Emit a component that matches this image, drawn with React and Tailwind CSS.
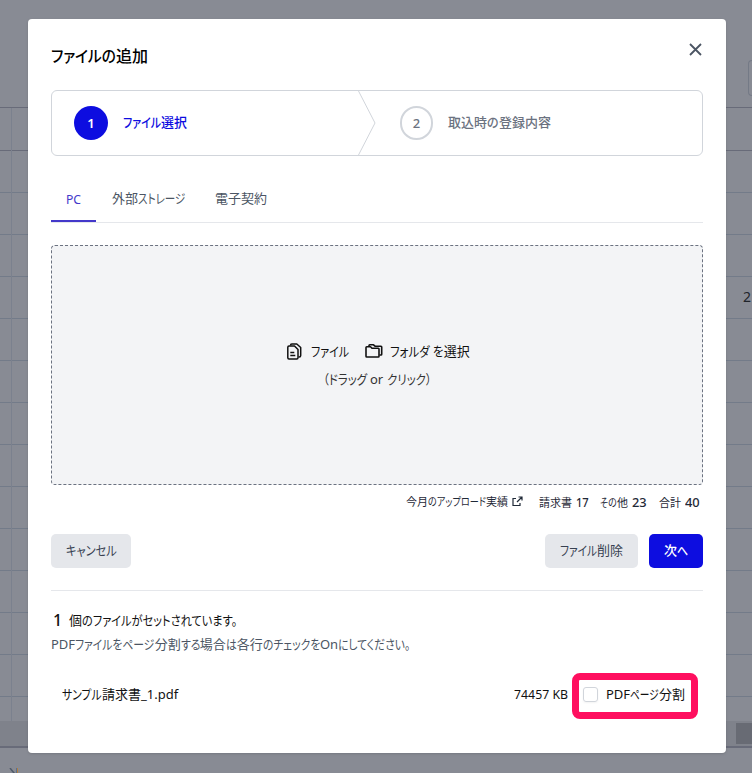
import { useLayoutEffect, useRef } from "react";

const KANA = /([\u3000-\u30ff（）。]+)/;

// Sets the text so that it fills the given width: the kana are condensed and
// the other glyphs keep their own widths.
function T({ w, className = "", children }) {
  const ref = useRef(null);
  const hasKana = KANA.test(children);
  const parts = hasKana ? children.split(KANA).filter(Boolean) : [children];
  useLayoutEffect(() => {
    const runs = [...ref.current.querySelectorAll("[data-run]")];
    const widths = runs.map((r) => r.firstChild.offsetWidth);
    const sum = widths.reduce((a, b) => a + b, 0);
    const rest = ref.current.offsetWidth - sum;
    const ratio = (w - rest) / sum;
    runs.forEach((r, i) => {
      r.style.width = `${widths[i] * ratio}px`;
      r.firstChild.style.transform = `scaleX(${ratio})`;
    });
  }, [w]);
  return (
    <span ref={ref} className={`inline-flex shrink-0 whitespace-pre ${className}`}>
      {parts.map((p, i) =>
        !hasKana || KANA.test(p) ? (
          <span key={i} data-run className="inline-block">
            <span className="inline-block origin-left [font-feature-settings:'palt']">{p}</span>
          </span>
        ) : (
          <span key={i}>{p}</span>
        )
      )}
    </span>
  );
}

function Background() {
  return (
    <div className="flex h-full flex-col bg-[#888b94]">
      <div className="flex h-[108px] shrink-0 justify-end border-b border-[#686b79] pt-[60px]">
        <div className="-mr-0.5 h-9 w-[6px] rounded-l-[4px] border border-r-0 border-[#747a86]" />
      </div>
      <div className="flex h-[613px] shrink-0">
        <div className="w-3 border-r border-[#7b818e]">
          <Rows />
        </div>
        <div className="flex-1">
          <Rows value="2" />
        </div>
      </div>
      <div className="flex h-[25px] shrink-0 items-center justify-end bg-[#7f828b]">
        <div className="h-[21px] w-4 bg-[#686b74]" />
      </div>
      <div className="h-[2px] shrink-0 bg-[#686b79]" />
      <div className="flex pl-[9px] pt-5">
        <svg width="10" height="10" viewBox="0 0 10 10" fill="none">
          <path d="M1 0l4 5-4 4" stroke="#4f5a6a" strokeWidth="1.5" />
          <path d="M7.500 0v10" stroke="#5b6f8c" />
          <path d="M8.500 0v10" stroke="#b3803f" />
        </svg>
      </div>
    </div>
  );
}

function Rows({ value }) {
  return (
    <div>
      <div className="h-[43px] border-b border-[#686b79]" />
      {Array.from({ length: 13 }, (_, i) => (
        <div key={i} className="flex h-[42px] items-center justify-end border-b border-[#737b89] pb-0.5 pr-px text-sm text-[#20242b]">
          {i === 3 && value}
        </div>
      ))}
    </div>
  );
}

function FilesIcon() {
  return (
    <svg width="15" height="17" viewBox="0 0 15 17" fill="none" stroke="#111" strokeWidth="1.5" strokeLinejoin="round">
      <path d="M3.5 2.500Q3.500 1 4.800 1H9.800L13.700 4.500V12.500Q13.700 14 12.200 14H11.500" />
      <path d="M2 3H7.500L11 6.500V14.800Q11 16 9.800 16H2Q.8 16 .8 14.800V4.200Q.8 3 2 3z" />
      <path d="M3.300 9.500h4M3.300 12.500h5" />
    </svg>
  );
}

function FoldersIcon() {
  return (
    <svg width="18" height="16" viewBox="0 0 18 16" fill="none" stroke="#111" strokeWidth="1.6" strokeLinejoin="round">
      <path d="M1 4.500Q1 3.800 1.700 3.800h3.800l1.500 1.500H13.300q.7 0 .7.700v7.300q0 .7-.7.700H1.700q-.7 0-.7-.7z" />
      <path d="M4 3.500V2.500Q4 1.800 4.700 1.800H8.500L10 3.200H16Q16.700 3.200 16.700 3.900V11.300Q16.700 12 16 12H14.500" />
    </svg>
  );
}

export default function App() {
  return (
    <div className="relative h-[773px] w-[752px] overflow-hidden font-['Noto_Sans','Noto_Sans_CJK_JP',sans-serif] text-[13px] leading-5">
      <Background />
      <div className="absolute left-7 top-[19px] flex h-[734px] w-[698px] flex-col rounded bg-white px-[23px] shadow">
        <div className="flex h-[71px] shrink-0 items-start justify-between">
          <T w={97} className="pt-[26px] text-base font-medium leading-[22px] text-black">ファイルの追加</T>
          <svg className="mr-px mt-6" width="13" height="13" viewBox="0 0 13 13" stroke="#4b5563" strokeWidth="1.8">
            <path d="M1 1l11 11M12 1L1 12" />
          </svg>
        </div>

        <div className="flex h-[66px] shrink-0 rounded-md border border-[#d1d5db] font-medium">
          <div className="flex w-[306px] items-center pl-[22px] text-[#0d0de0]">
            <div className="mr-[15px] flex size-[34px] items-center justify-center rounded-full bg-[#0d0de0] font-semibold text-white">1</div>
            <T w={64} className="pb-0.5">ファイル選択</T>
          </div>
          <svg width="18" height="64" viewBox="0 0 18 64" fill="none" stroke="#d1d5db">
            <path d="M.5 0l16.500 32-16.500 32" />
          </svg>
          <div className="flex items-center pl-6 text-[#6b7280]">
            <div className="mr-[15px] flex h-[34px] w-[33px] items-center justify-center rounded-full border-2 border-[#d1d5db]">2</div>
            <T w={103} className="pb-0.5">取込時の登録内容</T>
          </div>
        </div>

        <div className="mt-[21px] flex h-[46px] shrink-0 border-b border-[#e5e7eb] text-[#4b5563]">
          <div className="flex h-[45px] w-[45px] items-center justify-center border-b-2 border-[#4338ca] text-[#4338ca]">
            <T w={15}>PC</T>
          </div>
          <div className="ml-4 flex h-[42px] items-center">
            <T w={73}>外部ストレージ</T>
          </div>
          <div className="ml-[30px] flex h-[42px] items-center">
            <T w={52}>電子契約</T>
          </div>
        </div>

        <div className="mt-[22px] flex h-60 shrink-0 flex-col items-center rounded border border-dashed border-[#6b7280] bg-[#f3f4f6] pt-[95px] text-[#111]">
          <div className="flex h-5 items-center pl-[3px]">
            <span className="mt-px"><FilesIcon /></span>
            <T w={38} className="ml-[9px]">ファイル</T>
            <span className="ml-4"><FoldersIcon /></span>
            <T w={79} className="ml-[7px]">フォルダ を選択</T>
          </div>
          <T w={109} className="mt-2 text-[#333]">（ドラッグ or クリック）</T>
        </div>

        <div className="mt-[7px] flex h-5 shrink-0 items-center justify-end pr-[3px] text-[11px] text-[#1f2937]">
          <T w={102}>今月のアップロード実績</T>
          <svg className="mb-[2px] ml-[4px] mr-4" width="11" height="11" viewBox="0 0 11 11" fill="none" stroke="#1f2937" strokeWidth="1.200">
            <path d="M4 2.500H1v7h7V7M6.500 1H10v3.500M10 1L5 6" />
          </svg>
          <T w={33} className="pt-px">請求書</T>
          <T w={13} className="ml-1 pt-px text-xs font-medium">17</T>
          <T w={28} className="ml-[11px] pt-px">その他</T>
          <T w={15} className="ml-1 pt-px text-xs font-medium">23</T>
          <T w={22} className="ml-3 pt-px">合計</T>
          <T w={15} className="ml-1 pt-px text-xs font-medium">40</T>
        </div>

        <div className="mt-[22px] flex h-[34px] shrink-0 text-[#374151]">
          <button className="flex w-20 items-center justify-center rounded-[5px] bg-[#e5e7eb] pb-0.5"><T w={51}>キャンセル</T></button>
          <button className="ml-auto flex w-[93px] items-center justify-center rounded-[5px] bg-[#e5e7eb] pb-0.5"><T w={63}>ファイル削除</T></button>
          <button className="ml-[11px] flex w-[54px] items-center justify-center rounded-[5px] bg-[#0d0de0] pb-0.5 font-medium text-white"><T w={24}>次へ</T></button>
        </div>

        <div className="mt-[22px] flex h-10 shrink-0 items-end border-t border-[#e5e7eb] text-[#111]">
          <span className="ml-[2px] w-4 text-base font-medium leading-5">1</span>
          <T w={168}>個のファイルがセットされています。</T>
        </div>
        <div className="mt-1 flex h-5 shrink-0 text-[#4b5563]">
          <T w={359}>PDFファイルをページ分割する場合は各行のチェックをOnにしてください。</T>
        </div>

        <div className="mt-[19px] flex h-[46px] shrink-0 items-center pl-[11px] text-[#111]">
          <T w={116} className="pb-1">サンプル請求書_1.pdf</T>
          <T w={54} className="ml-auto pb-1">74457 KB</T>
          <div className="ml-1 mr-[5px] flex h-[46px] w-[126px] items-center rounded-lg border-[7px] border-[#ff0f5f] pb-[3px] pl-1">
            <span className="size-[15px] rounded-[3px] border border-[#d1d5db] shadow-xs" />
            <T w={79} className="ml-2 pb-px">PDFページ分割</T>
          </div>
        </div>
      </div>
    </div>
  );
}
